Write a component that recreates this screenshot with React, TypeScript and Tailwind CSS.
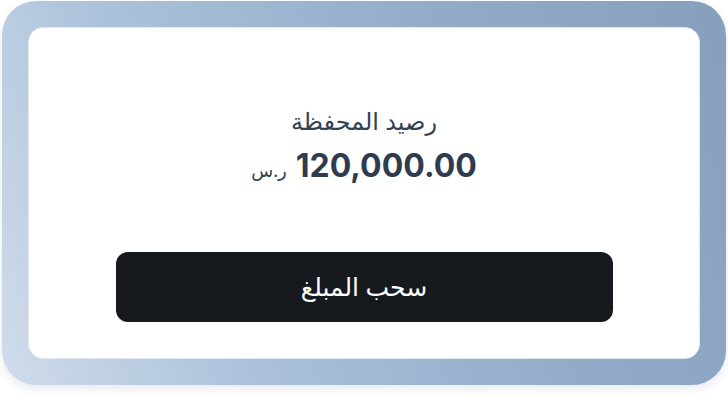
import React from "react";

const FONT = { fontFamily: '"Noto Sans", "DejaVu Sans", sans-serif' };

export default function App() {
  return (
    <div className="w-[728px] h-[406px] bg-white pt-[1px] pl-[2px]" style={FONT}>
      <div className="w-[724px] h-[384px] rounded-[34px] p-[26px] bg-[linear-gradient(68deg,#d0dcea_0%,#acc2db_28%,#93acc8_65%,#859fbd_100%)] shadow-[0_4px_10px_rgba(120,140,170,0.18)]">
        <div
          dir="rtl"
          className="h-full w-full bg-white rounded-[15px] border border-slate-200 flex flex-col items-center pt-[76px]"
        >
          <h2 className="text-[24px] leading-[34px] text-[#334155]">رصيد المحفظة</h2>
          <div className="mt-[8px] flex items-baseline gap-[9px]">
            <span
              dir="ltr"
              className="text-[32px] leading-[40px] font-bold text-[#2f3b4f]"
              style={{ fontFamily: 'Inter, "Noto Sans", sans-serif' }}
            >
              120,000.00
            </span>
            <span className="text-[18px] text-[#334155]">ر.س</span>
          </div>
          <button
            type="button"
            className="mt-[66px] w-[497px] h-[70px] rounded-[12px] bg-[#16191e] text-white text-[25px]"
          >
            سحب المبلغ
          </button>
        </div>
      </div>
    </div>
  );
}
